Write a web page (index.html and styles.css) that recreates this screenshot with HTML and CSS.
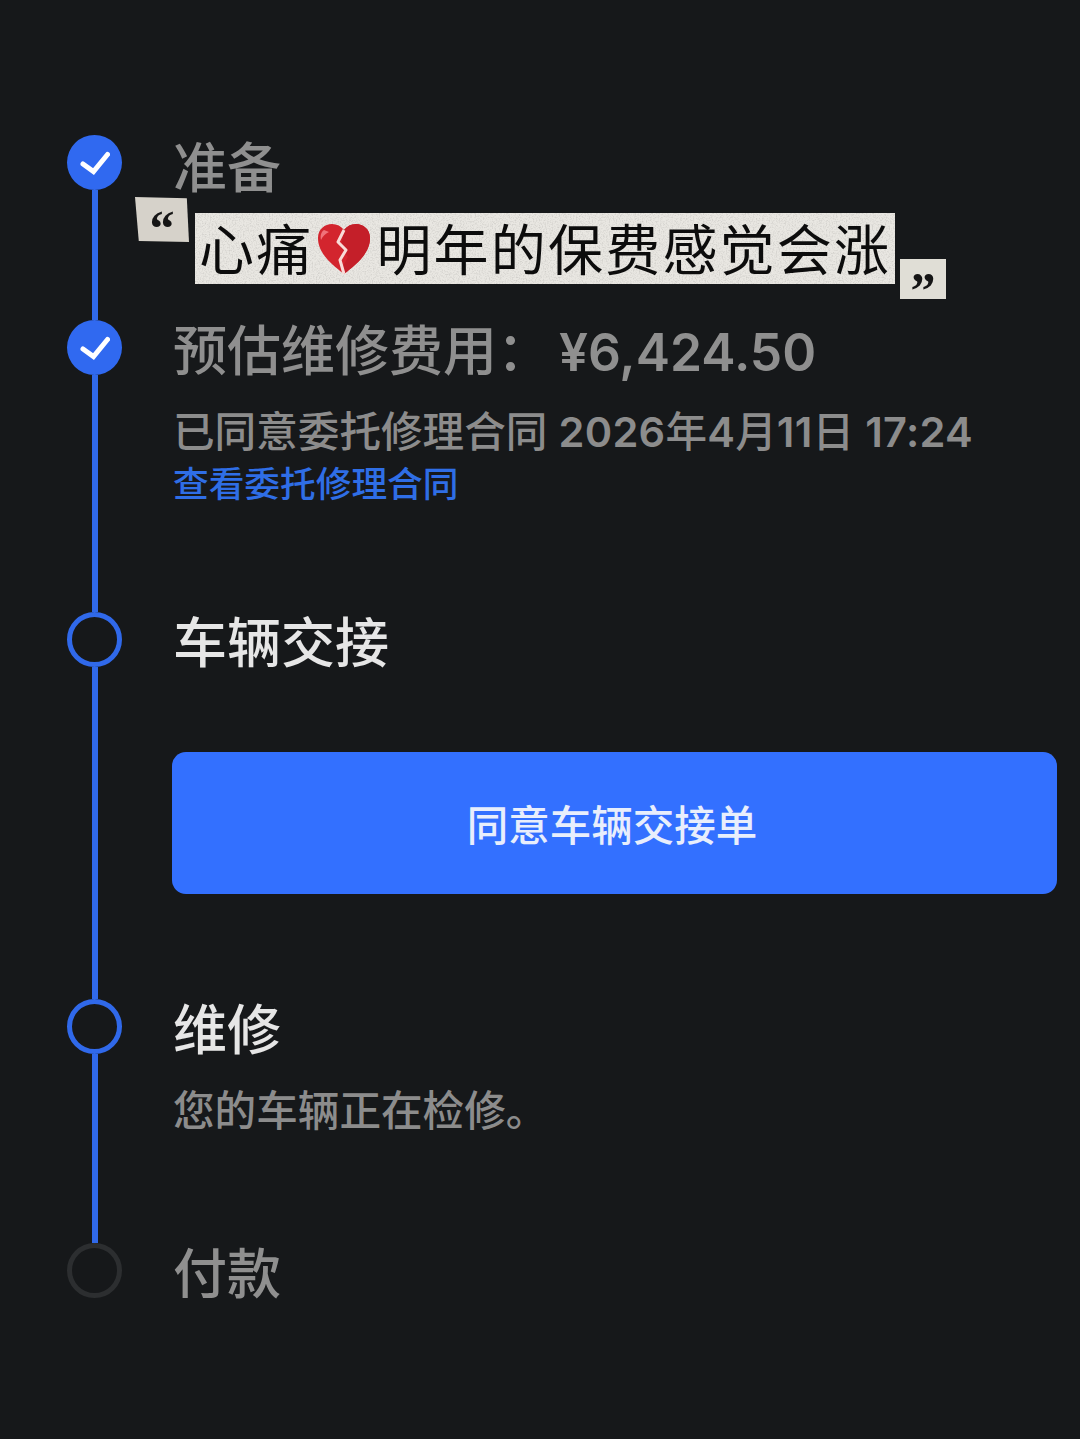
FILE: index.html
```html
<!DOCTYPE html>
<html lang="zh-CN">
<head>
  <meta charset="UTF-8">
  <title>维修进度</title>
  <link rel="stylesheet" href="styles.css">
</head>
<body>

  <svg class="defs" width="0" height="0" aria-hidden="true">
    <filter id="paper" x="0" y="0" width="100%" height="100%">
      <feTurbulence type="fractalNoise" baseFrequency="0.7" numOctaves="2" seed="4"/>
      <feColorMatrix values="0 0 0 0 0.45  0 0 0 0 0.44  0 0 0 0 0.42  0 0 0 1.1 -0.48"/>
    </filter>
  </svg>

  <main class="timeline">

    <section class="step step-prepare">
      <div class="rail">
        <span class="marker done">
          <svg viewBox="0 0 30 24" width="30" height="24"><path d="M3 13l10.500 7.500L27.500 3.500" fill="none" stroke="#fff" stroke-width="5" stroke-linecap="round"/></svg>
        </span>
        <span class="line"></span>
      </div>
      <div class="content">
        <h2 class="title muted first-title">准备</h2>
      </div>
    </section>

    <section class="step step-estimate">
      <div class="rail">
        <span class="marker done">
          <svg viewBox="0 0 30 24" width="30" height="24"><path d="M3 13l10.500 7.500L27.500 3.500" fill="none" stroke="#fff" stroke-width="5" stroke-linecap="round"/></svg>
        </span>
        <span class="line"></span>
      </div>
      <div class="content">
        <h2 class="title muted">预估维修费用：<span class="price">¥6,424.50</span></h2>
        <p class="note">已同意委托修理合同 <span class="num">2026</span>年<span class="num">4</span>月<span class="num">11</span>日 <span class="num">17:24</span></p>
        <a class="link" href="#">查看委托修理合同</a>
      </div>
    </section>

    <section class="step step-handover">
      <div class="rail">
        <span class="marker open"></span>
        <span class="line"></span>
      </div>
      <div class="content">
        <h2 class="title">车辆交接</h2>
        <button class="agree">同意车辆交接单</button>
      </div>
    </section>

    <section class="step step-repair">
      <div class="rail">
        <span class="marker open"></span>
        <span class="line"></span>
      </div>
      <div class="content">
        <h2 class="title">维修</h2>
        <p class="note repair-note">您的车辆正在检修。</p>
      </div>
    </section>

    <section class="step">
      <div class="rail">
        <span class="marker todo"></span>
      </div>
      <div class="content">
        <h2 class="title muted">付款</h2>
      </div>
    </section>

  </main>

  <!-- sticker laid over the timeline -->
  <div class="quote-mark open-mark">“</div>
  <div class="sticker">
    <span>心痛</span>
    <svg class="heart" viewBox="0 0 54 52" width="54" height="52">
      <path d="M27 51C14 41 1 30 1 15 1 6 8 1 15 1c5 0 9 2 12 6 3-4 7-6 12-6 7 0 14 5 14 14 0 15-13 26-26 36z" fill="#d3252e"/>
      <path d="M27 7c3-4 7-6 12-6 7 0 14 5 14 14 0 15-13 26-26 36l-1-8 5-9-7-9z" fill="#c41f29"/>
      <path d="M27 7l-6 12 8 8-6 10 4 14" fill="none" stroke="#f8dcd8" stroke-width="3" stroke-linejoin="round"/>
      <path d="M7 7c-3 2-4 6-3 10 2-4 4-6 8-8z" fill="#f0727a"/>
    </svg>
    <span>明年的保费感觉会涨</span>
  </div>
  <div class="quote-mark close-mark">”</div>

</body>
</html>
```

FILE: styles.css
```css
html, body {
  margin: 0;
  height: 100%;
}

body {
  position: relative;
  width: 1080px;
  height: 1439px;
  overflow: hidden;
  background: #16181a;
  font-family: Inter, "Noto Sans CJK SC", sans-serif;
  color: #e6e6e6;
}

.defs {
  position: absolute;
}

.timeline {
  display: flex;
  flex-direction: column;
  padding: 135px 23px 0 67px;
}

.step {
  display: flex;
}

.step-prepare { height: 185px; }
.step-estimate { height: 292px; }
.step-handover { height: 387px; }
.step-repair { height: 244px; }

.rail {
  display: flex;
  flex-direction: column;
  align-items: center;
  width: 55px;
  margin-right: 51px;
  flex-shrink: 0;
}

.marker {
  display: flex;
  align-items: center;
  justify-content: center;
  box-sizing: border-box;
  width: 55px;
  height: 55px;
  border-radius: 50%;
  flex-shrink: 0;
}

.done { background: #3069f0; }
.open { border: 5px solid #3069ea; }
.todo { border: 5px solid #2c2e30; }

.line {
  flex: 1;
  width: 6px;
  background: #3069ea;
}

.content {
  flex: 1;
  min-width: 0;
}

.title {
  margin: 0;
  font-size: 54px;
  font-weight: 500;
  line-height: 64px;
  white-space: nowrap;
}

.first-title {
  margin-top: 2px;
}

.muted { color: #8f8f8f; }

.price {
  margin-left: 8px;
  font-family: Inter, sans-serif;
  font-weight: 600;
  font-size: 51.500px;
}

.note {
  margin: 22px 0 0;
  font-size: 41.600px;
  font-weight: 500;
  line-height: 52px;
  color: #8c8c8c;
  white-space: nowrap;
}

.note .num {
  font-weight: 600;
  letter-spacing: 0.3px;
}

.link {
  display: block;
  font-size: 35.700px;
  font-weight: 500;
  line-height: 52px;
  color: #2f6ee6;
  text-decoration: none;
}

.agree {
  display: block;
  width: 885px;
  height: 142px;
  margin: 76px 0 0 -1px;
  padding: 0 5px 0 0;
  border: 0;
  border-radius: 14px;
  background: #3370ff;
  color: #e8eefc;
  font-family: inherit;
  font-size: 41.500px;
  font-weight: 500;
}

.repair-note {
  margin-top: 22px;
}

/* paper sticker */
.sticker {
  position: absolute;
  left: 195px;
  top: 213px;
  display: flex;
  align-items: center;
  box-sizing: border-box;
  width: 700px;
  height: 71px;
  padding: 0 0 6px 4px;
  background: #e9e7e2;
  color: #0c0c0c;
  font-family: "Noto Sans CJK SC", sans-serif;
  font-size: 55px;
  white-space: nowrap;
}

.sticker::before {
  content: "";
  position: absolute;
  inset: 0;
  filter: url(#paper);
}

.sticker span {
  position: relative;
  letter-spacing: 2.200px;
}

.heart {
  position: relative;
  margin: 6px 5px 0 4px;
  flex-shrink: 0;
}

.quote-mark {
  position: absolute;
  box-sizing: border-box;
  background: #d6d2ca;
  color: #151515;
  font-family: "Liberation Serif", serif;
  font-weight: 700;
  font-size: 50px;
  line-height: 1;
  text-align: center;
}

.open-mark {
  left: 135px;
  top: 197px;
  width: 54px;
  height: 45px;
  padding-top: 6px;
  clip-path: polygon(0 0, 96% 3%, 100% 100%, 7% 98%);
}

.close-mark {
  left: 900px;
  top: 259px;
  width: 46px;
  height: 40px;
  padding-top: 6px;
  background: #e0ded6;
}
```
